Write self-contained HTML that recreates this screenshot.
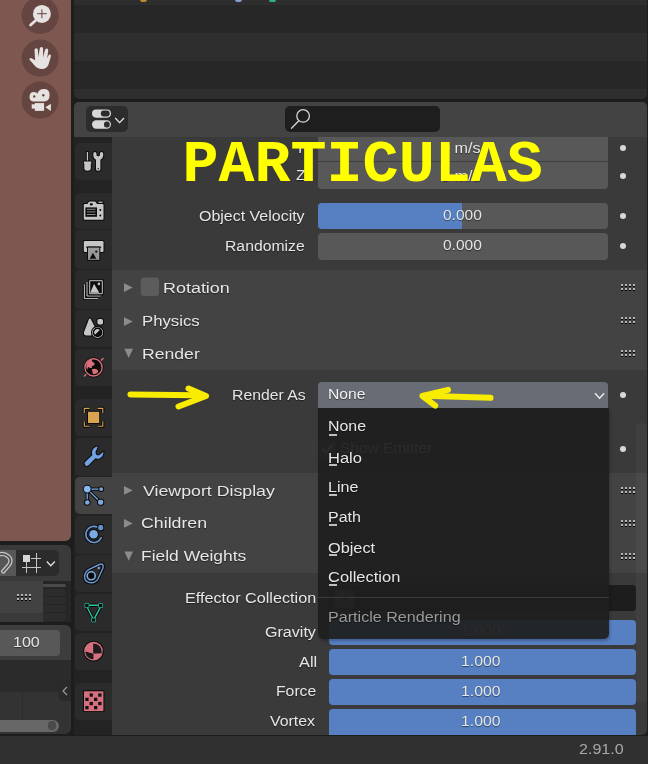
<!DOCTYPE html>
<html><head><meta charset="utf-8">
<style>
*{margin:0;padding:0;box-sizing:border-box}
html,body{width:648px;height:764px;overflow:hidden;background:#1d1d1d;font-family:"Liberation Sans",sans-serif;color:#e6e6e6}
.a{position:absolute}
.t{position:absolute;white-space:nowrap;line-height:1;font-size:15.5px;color:#e6e6e6;text-shadow:0 1px 1px rgba(0,0,0,.5);transform-origin:0 0;will-change:transform}
.r{text-align:right}
svg{position:absolute;overflow:visible}
.fld{position:absolute;background:#585858;border-radius:4px}
.dot{position:absolute;width:6.4px;height:6.4px;border-radius:50%;background:#d8d8d8}
.tab{position:absolute;left:75px;width:37px;background:#2b2b2b;border-radius:5px 0 0 5px}
.hdr{position:absolute;left:112px;width:535px;background:#434343}
.grip{position:absolute;width:15px;height:7px}
.ht{font-size:17px}
.mi{font-size:15.5px;color:#e8e8e8}
.ul{position:absolute;height:2px;background:#bdbdbd}
</style></head><body>

<!-- ============ LEFT VIEWPORT (red) ============ -->
<div class="a" style="left:0;top:0;width:71px;height:541px;background:#7e5750;border-bottom-right-radius:6px"></div>
<svg style="left:0;top:0" width="71" height="130" viewBox="0 0 71 130">
  <circle cx="40.1" cy="15.4" r="18.5" fill="#65453f"/>
  <circle cx="40.1" cy="58.1" r="18.5" fill="#65453f"/>
  <circle cx="40.1" cy="100.1" r="18.5" fill="#65453f"/>
  <!-- zoom -->
  <line x1="30.6" y1="25" x2="35.6" y2="20.5" stroke="#e6e2e1" stroke-width="2.8" stroke-linecap="round"/>
  <circle cx="41.9" cy="13.9" r="9" fill="#e6e2e1"/>
  <path d="M37.3 13.7H46.9M41.9 9.3V18.2" stroke="#65453f" stroke-width="1"/>
  <!-- hand -->
  <path d="M29.3 59.6 Q29.6 57.7 31.6 58.2 L35.1 60.2 L34.5 49.9 Q34.6 48.2 36.2 48.2 Q37.8 48.2 37.9 49.9 L38.4 57 L39.7 48.7 Q39.9 47 41.5 47 Q43.1 47 43.1 48.7 L43 57.2 L45 50.1 Q45.4 48.5 46.8 48.6 Q48.4 48.8 48.2 50.5 L47.2 58.2 L48.4 55.7 Q49 54.3 50.2 54.6 Q51.3 55 50.9 56.5 L48.6 64.2 Q47.1 69 41.8 69 Q37.2 69 34.6 65.6 Z" fill="#e6e2e1"/>
  <!-- camera -->
  <path d="M33.9 92 Q36.5 92 37.6 93.5 Q38.8 89 43.8 89 Q49.6 89 49.6 94.8 Q49.6 101.4 44 101.4 L33.9 101.4 Q29.5 101.4 29.5 96.7 Q29.5 92 33.9 92 Z" fill="#e6e2e1"/>
  <circle cx="34.2" cy="96.4" r="1.2" fill="#65453f"/>
  <circle cx="43.3" cy="95.2" r="1.2" fill="#65453f"/>
  <rect x="34.8" y="103.1" width="9.3" height="7.8" fill="#e6e2e1"/>
  <rect x="31.7" y="104.3" width="3.3" height="4.3" fill="#e6e2e1"/>
  <path d="M45.3 107.3 L50.9 103.8 L50.9 110.9 Z" fill="#e6e2e1"/>
</svg>

<!-- ============ LEFT LOWER EDITOR ============ -->
<div class="a" style="left:0;top:545px;width:71px;height:36px;background:#3a3a3a;border-top-right-radius:6px"></div>
<div class="a" style="left:0;top:550px;width:15.5px;height:26px;background:#575757"></div>
<svg style="left:0;top:550px" width="16" height="26" viewBox="0 0 16 26">
  <path d="M-3 5.5 Q3 2 8.5 6.5 Q12.5 10.5 8.5 15.5 L3.2 21.5" fill="none" stroke="#c8c8c8" stroke-width="4.2" stroke-linecap="round"/>
  <path d="M-3 5.5 Q3 2 8.5 6.5 Q12.5 10.5 8.5 15.5 L3.2 21.5" fill="none" stroke="#575757" stroke-width="1.8" stroke-linecap="round"/>
</svg>
<div class="a" style="left:15.5px;top:550px;width:43.5px;height:26px;background:#2b2b2b;border-radius:0 5px 5px 0"></div>
<svg style="left:0;top:545px" width="71" height="36" viewBox="0 545 71 36">
  <path d="M26.5 562V573M36.5 553V573M31 558.5H41M22 567.5H41" stroke="#c4c4c4" stroke-width="1"/>
  <rect x="23" y="555" width="7" height="7" fill="#d6d6d6"/>
  <path d="M46.8 561.5 L50.8 565.8 L54.8 561.5" fill="none" stroke="#e0e0e0" stroke-width="1.3"/>
</svg>
<div class="a" style="left:0;top:581px;width:43px;height:32px;background:#424242"></div>
<div class="a" style="left:0;top:613px;width:43px;height:8.5px;background:#3a3a3a"></div>
<div class="a" style="left:43px;top:581px;width:28px;height:41px;background:#262626"></div>
<div class="a" style="left:43px;top:583.5px;width:23px;height:3.5px;background:#4a4a4a;border-radius:0 2px 2px 0"></div>
<div class="a" style="left:43px;top:589px;width:23px;height:7px;background:#2c2c2c;border-radius:0 3px 3px 0"></div>
<div class="a" style="left:43px;top:597px;width:23px;height:7px;background:#2c2c2c;border-radius:0 3px 3px 0"></div>
<div class="a" style="left:43px;top:605px;width:23px;height:7px;background:#2c2c2c;border-radius:0 3px 3px 0"></div>
<div class="a" style="left:43px;top:613px;width:23px;height:8px;background:#2c2c2c;border-radius:0 3px 3px 0"></div>

<div class="a" style="left:0;top:625px;width:71px;height:109px;background:#333333;border-radius:0 6px 6px 0"></div>
<div class="a" style="left:0;top:625px;width:71px;height:35px;background:#3d3d3d;border-top-right-radius:6px"></div>
<div class="a" style="left:0;top:660px;width:71px;height:31.5px;background:#2b2b2b"></div>
<div class="a" style="left:22px;top:691px;width:1px;height:28px;background:#2b2b2b"></div>
<div class="fld" style="left:0;top:630px;width:59.5px;height:26px;border-radius:0 4px 4px 0"></div>
<div class="t" style="left:12.96px;top:634.20px;transform:scaleX(1.036)">100</div>
<div class="a" style="left:59px;top:681px;width:12px;height:20px;background:#2a2a2a;border-radius:4px 0 0 4px"></div>
<svg style="left:59px;top:681px" width="12" height="20" viewBox="0 0 12 20"><path d="M8 6 L4 10 L8 14" fill="none" stroke="#9a9a9a" stroke-width="1.2"/></svg>
<div class="a" style="left:0;top:719.5px;width:58.5px;height:12.5px;background:#676767;border-radius:0 6.25px 6.25px 0"></div>
<div class="a" style="left:47.6px;top:721.2px;width:8.6px;height:8.6px;background:#4a4a4a;border-radius:50%"></div>

<!-- ============ OUTLINER (top) ============ -->
<div class="a" style="left:74px;top:0;width:573px;height:99px;background:#2e2e2e;border-radius:0 0 5px 5px;overflow:hidden">
  <div class="a" style="left:0;top:5px;width:573px;height:28px;background:#272727"></div>
  <div class="a" style="left:0;top:61px;width:573px;height:28px;background:#272727"></div>
  <div class="a" style="left:66px;top:-3px;width:7px;height:5px;background:#c08a30;border-radius:3px"></div>
  <div class="a" style="left:161px;top:-3px;width:7px;height:5px;background:#8aa0d0;border-radius:3px"></div>
  <div class="a" style="left:195px;top:-3px;width:7px;height:5px;background:#30b080;border-radius:2px"></div>
</div>

<!-- ============ PROPERTIES ============ -->
<div class="a" style="left:74px;top:102px;width:573px;height:633px;background:#3a3a3a;border-radius:5px 5px 5px 0;overflow:hidden"></div>
<!-- tab column -->
<div class="a" style="left:74px;top:137px;width:38px;height:598px;background:#232323"></div>
<div class="tab" style="top:143px;height:36.5px"></div>
<div class="tab" style="top:192.5px;height:36.5px"></div>
<div class="tab" style="top:230px;height:39px"></div>
<div class="tab" style="top:270px;height:38.5px"></div>
<div class="tab" style="top:310px;height:37px"></div>
<div class="tab" style="top:349px;height:37px"></div>
<div class="tab" style="top:399px;height:37px"></div>
<div class="tab" style="top:438px;height:37.5px"></div>
<div class="tab" style="top:477px;height:36.5px;background:#434343"></div>
<div class="tab" style="top:516px;height:37.5px"></div>
<div class="tab" style="top:555px;height:37px"></div>
<div class="tab" style="top:594px;height:37px"></div>
<div class="tab" style="top:633px;height:37px"></div>
<div class="tab" style="top:683px;height:37px"></div>

<!-- tab icons -->
<svg style="left:76px;top:0" width="36" height="764" viewBox="0 0 36 764">
  <g stroke="#0c0c0c" stroke-width="2" paint-order="stroke" stroke-linejoin="round">
  <!-- tool -->
  <g transform="translate(0,143)" fill="#c6c6c6">
    <rect x="10.8" y="9" width="1.3" height="9"/>
    <path d="M8.2 18.6 H14.9 Q15.3 18.6 15.3 19.3 V20 Q15.3 20.5 14.8 20.6 V25.3 Q14.8 27.8 11.5 27.8 Q8.3 27.8 8.3 25.3 V20.6 Q7.8 20.5 7.8 20 V19.3 Q7.8 18.6 8.2 18.6 Z"/>
    <path d="M17.3 10.5 Q17.3 9 18.8 9 Q20.5 9 20.5 10.5 V12 Q20.5 13.3 22.2 13.3 Q23.9 13.3 23.9 12 V10.5 Q23.9 9 25.5 9 Q27.2 9 27.2 10.5 V12.5 Q27.2 15.5 24.4 16.8 V26.3 Q24.4 27.8 22.2 27.8 Q20 27.8 20 26.3 V16.8 Q17.3 15.5 17.3 12.5 Z"/>
  </g>
  <circle cx="22.2" cy="168.8" r="0.7" fill="#0c0c0c" stroke="none"/>
  <!-- render -->
  <g transform="translate(0,192)">
    <path d="M8.8 12 H11.5 L12.5 10.2 Q13 9.6 14 9.6 H18.5 Q19.3 9.6 19.8 10.2 L21 12 H26.5 Q27.5 12 27.5 13 V26.8 Q27.5 27.8 26.5 27.8 H8.8 Q7.8 27.8 7.8 26.8 V13 Q7.8 12 8.8 12 Z" fill="#c6c6c6"/>
    <rect x="22.5" y="9.6" width="4" height="1.2" fill="#c6c6c6"/>
    <rect x="9.4" y="15.4" width="11.6" height="9.4" fill="#0c0c0c" stroke="none"/>
    <g fill="#8a8a8a" stroke="none"><rect x="10.9" y="16.8" width="8.6" height="1"/><rect x="10.9" y="19.4" width="8.6" height="1"/><rect x="10.9" y="22" width="8.6" height="1"/></g>
    <rect x="13.8" y="11.2" width="3" height="2.2" rx="0.8" fill="#0c0c0c" stroke="none"/>
    <circle cx="24.3" cy="18" r="1" fill="#0c0c0c" stroke="none"/>
    <circle cx="24.3" cy="23.6" r="1" fill="#0c0c0c" stroke="none"/>
  </g>
  <!-- output -->
  <g transform="translate(0,231)">
    <path d="M9 10 H26.3 Q27.5 10 27.5 11.2 V20 Q27.5 21 26.5 21 H8.8 Q7.8 21 7.8 20 V11.2 Q7.8 10 9 10 Z" fill="#c6c6c6"/>
    <rect x="10.2" y="15.6" width="15" height="1.2" fill="#0c0c0c" stroke="none"/>
    <rect x="12" y="16.6" width="11.3" height="12.2" fill="#9a9a9a"/>
    <path d="M13.6 27.8 L16.9 21.8 L20.3 27.8 Z" fill="#0c0c0c" stroke="none"/>
    <circle cx="20.3" cy="20.7" r="1.15" fill="#0c0c0c" stroke="none"/>
  </g>
  <!-- view layer -->
  <g transform="translate(0,270)">
    <path d="M8.4 15 V28.6 H21.4" fill="none" stroke="#0c0c0c" stroke-width="3"/>
    <path d="M8.4 15 V28.6 H21.4" fill="none" stroke="#c6c6c6" stroke-width="1" stroke-linecap="square"/>
    <path d="M11 12.5 V26 H24" fill="none" stroke="#0c0c0c" stroke-width="3"/>
    <path d="M11 12.5 V26 H24" fill="none" stroke="#c6c6c6" stroke-width="1" stroke-linecap="square"/>
    <rect x="13.2" y="10.2" width="13.6" height="14" fill="#0c0c0c" stroke="#0c0c0c" stroke-width="2"/>
    <rect x="13.7" y="10.7" width="12.6" height="13" fill="none" stroke="#c6c6c6" stroke-width="1" />
    <path d="M14.3 22.7 L18 13.8 L23.3 22.7 Z" fill="#c6c6c6" stroke="none"/>
    <circle cx="22.9" cy="13.9" r="1.3" fill="#c6c6c6" stroke="none"/>
  </g>
  <!-- scene -->
  <g transform="translate(0,310)">
    <path d="M13.9 8.6 Q14.6 8.6 15 9.4 L19.2 17.8 Q15.4 19.8 15.6 25.6 L10.5 25.6 Q7.6 25.6 7.9 22.6 L12.8 9.4 Q13.2 8.6 13.9 8.6 Z" fill="#c6c6c6"/>
    <rect x="21.4" y="9" width="5.6" height="5.4" rx="1.6" fill="#c6c6c6"/>
    <circle cx="21.6" cy="22.4" r="4.8" fill="#0c0c0c" stroke="#0c0c0c" stroke-width="3.6"/>
    <circle cx="21.6" cy="22.4" r="4.8" fill="#0c0c0c" stroke="#c6c6c6" stroke-width="1.4"/>
    <path d="M19.2 24.6 A3.2 3.2 0 0 1 23.8 20.1 Z" fill="#c6c6c6" stroke="none"/>
  </g>
  <!-- world -->
  <g transform="translate(0,349)">
    <path d="M8.4 27.1 L27.1 9.5" stroke="#d9707c" stroke-width="1.4" stroke-linecap="round"/>
    <circle cx="17.5" cy="18.4" r="8.6" fill="#0c0c0c" stroke="#0c0c0c" stroke-width="3"/>
    <circle cx="17.5" cy="18.4" r="8.6" fill="none" stroke="#d9707c" stroke-width="1.4"/>
    <path d="M10.6 14 Q12.6 10.8 16.2 10.3 Q15.4 11.9 16.6 12.9 Q18.8 13.4 18.7 15.2 Q17.8 16.8 16.3 17 Q15.2 17.6 16 18.8 Q14.5 19.3 13.4 18.4 Q12.5 17.5 11.8 19 Q11.2 20.5 11.3 21.3 Q9.6 17.6 10.6 14 Z" fill="#d9707c" stroke="none"/>
    <path d="M15.9 20.2 Q18.2 19.4 20.8 20.2 Q22.6 21.2 22 23.2 Q20.5 25.2 17 25.3 Q16.3 22.5 15.9 20.2 Z" fill="#d9707c" stroke="none"/>
  </g>
  <!-- object -->
  <g transform="translate(0,399)">
    <path d="M8.3 14 V9.4 H13.4 M21.7 9.4 H26.8 V14 M8.3 22.5 V27.3 H13.4 M21.7 27.3 H26.8 V22.5" fill="none" stroke="#0c0c0c" stroke-width="3.2"/>
    <path d="M8.3 14 V9.4 H13.4 M21.7 9.4 H26.8 V14 M8.3 22.5 V27.3 H13.4 M21.7 27.3 H26.8 V22.5" fill="none" stroke="#daa350" stroke-width="1.1"/>
    <rect x="12" y="12.8" width="11.2" height="11.2" fill="#daa350"/>
  </g>
  <!-- modifier -->
  <g transform="translate(0,438)">
    <path d="M22 8.6 Q17 9 16 13.8 Q15.6 15.8 16.4 17.1 L9.1 24 Q7.9 25.6 9.3 27.2 Q10.9 28.6 12.5 27.2 L19.5 20.3 Q21.3 21 23.5 20.4 Q27.4 18.8 27.5 13.8 L23.8 16.8 Q22.2 17.8 20.6 16.9 Q19.1 15.5 19.7 13.6 Z" fill="#72a2e2"/>
  </g>
  <!-- particles (active) -->
  <g transform="translate(0,477)">
    <path d="M11.2 12.1 H25.2 M11.2 12.1 V25.5 M11.2 12.1 L24.5 25.3" stroke="#0c0c0c" stroke-width="3.4" fill="none"/>
    <path d="M11.2 12.1 H25.2 M11.2 12.1 V25.5 M11.2 12.1 L24.5 25.3" stroke="#7aa9e4" stroke-width="1.3" fill="none"/>
    <circle cx="11.2" cy="12.1" r="3.4" fill="#86b8f4"/>
    <circle cx="25.2" cy="12.1" r="1.9" fill="#7aa9e4"/>
    <circle cx="11.3" cy="25.5" r="2.3" fill="#7aa9e4"/>
    <rect x="22" y="22.8" width="5.2" height="5" rx="2" fill="#7aa9e4"/>
  </g>
  <!-- physics -->
  <g transform="translate(0,516)">
    <path d="M25.2 21.6 A8 8 0 1 1 21.5 11.3" fill="none" stroke="#0c0c0c" stroke-width="3.4" stroke-linecap="round"/>
    <path d="M25.2 21.6 A8 8 0 1 1 21.5 11.3" fill="none" stroke="#6e9ad6" stroke-width="1.6" stroke-linecap="round"/>
    <circle cx="17.6" cy="18.2" r="4.3" fill="#7aa9e4"/>
    <rect x="22.2" y="9" width="5" height="5.2" rx="1.8" fill="#6490c8"/>
  </g>
  <!-- constraints -->
  <g transform="translate(0,555)">
    <path d="M8.6 22.3 Q8.4 16.8 13.2 14.4 L23.3 9.5 Q26 8.4 26.9 10.1 Q27.7 11.6 26.7 13.7 L21.9 24 Q19.7 27.9 15.2 27.8 Q9 27.5 8.6 22.3 Z" fill="none" stroke="#0c0c0c" stroke-width="3.6"/>
    <path d="M8.6 22.3 Q8.4 16.8 13.2 14.4 L23.3 9.5 Q26 8.4 26.9 10.1 Q27.7 11.6 26.7 13.7 L21.9 24 Q19.7 27.9 15.2 27.8 Q9 27.5 8.6 22.3 Z" fill="none" stroke="#6e9ad6" stroke-width="1.4"/>
    <circle cx="15.2" cy="20.8" r="3.2" fill="#0c0c0c" stroke="#7aa9e4" stroke-width="3.2"/>
    <circle cx="15.2" cy="20.8" r="1.3" fill="#050505" stroke="none"/>
    <circle cx="22.8" cy="13" r="1.2" fill="#7aa9e4" stroke="none"/>
  </g>
  <!-- data -->
  <g transform="translate(0,594)">
    <path d="M12.8 11.3 H22.6 M11.2 13.2 L16.8 24.2 M24.4 13.2 L18.6 24.2" stroke="#0c0c0c" stroke-width="3.4" fill="none"/>
    <path d="M12.8 11.3 H22.6 M11.2 13.2 L16.8 24.2 M24.4 13.2 L18.6 24.2" stroke="#29c4a0" stroke-width="1.4" fill="none"/>
    <rect x="9.2" y="9.9" width="3.4" height="3.2" fill="#0c0c0c" stroke="#29c4a0" stroke-width="1.3"/>
    <rect x="22.9" y="9.9" width="3.4" height="3.2" fill="#0c0c0c" stroke="#29c4a0" stroke-width="1.3"/>
    <rect x="15.9" y="24.4" width="3.3" height="3.2" fill="#0c0c0c" stroke="#29c4a0" stroke-width="1.3"/>
  </g>
  <!-- material -->
  <g transform="translate(0,633)">
    <circle cx="17.5" cy="18.1" r="9.3" fill="#d5707e" stroke-width="2.2"/>
    <path d="M17.9 11 Q25 11.8 25.1 19.7 L17.9 19.9 Z" fill="#1c1c1c" stroke="#0c0c0c" stroke-width="1.2"/>
    <path d="M10 19.4 L16.8 21.3 L16.8 25.6 Q11.2 25.2 10 19.4 Z" fill="#1c1c1c" stroke="#0c0c0c" stroke-width="1.2"/>
  </g>
  <!-- texture -->
  <g transform="translate(0,683)">
    <rect x="8" y="8.3" width="19.4" height="19.8" fill="#d5707e"/>
    <g fill="#111" stroke="none">
      <rect x="13.6" y="10.4" width="3.3" height="3.3"/><rect x="22.2" y="10.4" width="3.3" height="3.3"/>
      <rect x="9.3" y="14.7" width="3.3" height="3.3"/><rect x="18" y="14.7" width="3.3" height="3.3"/>
      <rect x="13.6" y="18.9" width="3.3" height="3.3"/><rect x="22.2" y="18.9" width="3.3" height="3.3"/>
      <rect x="9.3" y="23" width="3.3" height="3.3"/><rect x="18" y="23" width="3.3" height="3.3"/>
    </g>
  </g>
  </g>
</svg>

<!-- content: velocity panel fields -->
<div class="fld" style="left:318px;top:113px;width:290px;height:76px"></div>
<div class="a" style="left:318px;top:161px;width:290px;height:1px;background:#3f3f3f"></div>
<div class="t" style="left:295.00px;top:139.50px">Y</div>
<div class="t" style="left:295.50px;top:167.00px;transform:scaleX(1.022)">Z</div>
<div class="t" style="left:441.00px;top:140.20px;transform:scaleX(1.045)">0 m/s</div>
<div class="t" style="left:441.00px;top:167.80px;transform:scaleX(1.045)">0 m/s</div>
<div class="fld" style="left:318px;top:203px;width:290px;height:26px"></div>
<div class="a" style="left:318px;top:203px;width:144px;height:26px;background:#5680c2;border-radius:4px 0 0 4px"></div>
<div class="fld" style="left:318px;top:233px;width:290px;height:26.5px"></div>
<div class="t" style="left:198.57px;top:208.00px;transform:scaleX(1.030)">Object Velocity</div>
<div class="t" style="left:225.08px;top:237.70px;transform:scaleX(1.016)">Randomize</div>
<div class="t" style="left:442.80px;top:206.80px">0.000</div>
<div class="t" style="left:442.80px;top:236.60px">0.000</div>
<div class="dot" style="left:619.8px;top:144.6px"></div>
<div class="dot" style="left:619.8px;top:172.6px"></div>
<div class="dot" style="left:619.8px;top:212.6px"></div>
<div class="dot" style="left:619.8px;top:242.7px"></div>

<!-- panel headers: Rotation/Physics/Render -->
<div class="hdr" style="top:270px;height:100px"></div>
<svg style="left:112px;top:270px" width="535" height="100" viewBox="0 0 535 100">
  <path d="M12 13.2 L20.7 17.6 L12 22 Z" fill="#8c8c8c"/>
  <path d="M12 47.2 L20.7 51.6 L12 56 Z" fill="#8c8c8c"/>
  <path d="M12.4 78.7 L21 78.7 L16.7 88 Z" fill="#8c8c8c"/>
  <rect x="28.8" y="7.6" width="18.2" height="18.3" rx="3" fill="#5c5c5c"/>
</svg>
<div class="t" style="left:163.14px;top:279.90px;transform:scaleX(1.157)">Rotation</div>
<div class="t" style="left:141.72px;top:312.90px;transform:scaleX(1.081)">Physics</div>
<div class="t" style="left:141.66px;top:346.00px;transform:scaleX(1.136)">Render</div>

<!-- render panel content -->
<div class="t" style="left:231.88px;top:387.30px;transform:scaleX(1.018)">Render As</div>
<div class="a" style="left:318px;top:382px;width:290px;height:26px;background:#686c74;border-radius:4px 4px 0 0"></div>
<div class="t" style="left:327.99px;top:386.30px;transform:scaleX(1.011);color:#f2f2f2">None</div>
<svg style="left:590px;top:388px" width="18" height="14" viewBox="0 0 18 14"><path d="M5 5.3 L9.6 10.2 L14.2 5.3" fill="none" stroke="#eee" stroke-width="1.4"/></svg>
<div class="dot" style="left:619.8px;top:391.8px"></div>
<div class="dot" style="left:619.8px;top:445.5px"></div>


<!-- headers: Viewport Display / Children / Field Weights -->
<div class="hdr" style="top:473px;height:100px"></div>
<svg style="left:112px;top:473px" width="535" height="100" viewBox="0 0 535 100">
  <path d="M12 13 L20.7 17.4 L12 21.8 Z" fill="#8c8c8c"/>
  <path d="M12 46 L20.7 50.4 L12 54.8 Z" fill="#8c8c8c"/>
  <path d="M12.4 78.5 L21 78.5 L16.7 87.8 Z" fill="#8c8c8c"/>
</svg>
<div class="t" style="left:142.50px;top:483.00px;transform:scaleX(1.145)">Viewport Display</div>
<div class="t" style="left:141.36px;top:515.40px;transform:scaleX(1.145)">Children</div>
<div class="t" style="left:141.38px;top:548.20px;transform:scaleX(1.125)">Field Weights</div>

<!-- field weights content -->
<div class="t" style="left:184.75px;top:590.00px;transform:scaleX(1.045)">Effector Collection</div>
<div class="t" style="left:264.56px;top:624.20px;transform:scaleX(1.037)">Gravity</div>
<div class="t" style="left:298.50px;top:653.60px;transform:scaleX(1.056)">All</div>
<div class="t" style="left:275.78px;top:682.70px;transform:scaleX(1.016)">Force</div>
<div class="t" style="left:270.30px;top:712.80px;transform:scaleX(1.025)">Vortex</div>
<div class="a" style="left:329px;top:585px;width:307px;height:26px;background:#1d1d1d;border-radius:4px"></div>
<div class="a" style="left:329px;top:619.5px;width:307px;height:25.5px;background:#5680c2;border-radius:4px"></div>
<div class="a" style="left:329px;top:649px;width:307px;height:25.5px;background:#5680c2;border-radius:4px"></div>
<div class="a" style="left:329px;top:679px;width:307px;height:25.5px;background:#5680c2;border-radius:4px"></div>
<div class="a" style="left:329px;top:709px;width:307px;height:26px;background:#5680c2;border-radius:4px 4px 0 0"></div>
<div class="t" style="left:461.38px;top:623.20px;transform:scaleX(1.016)">1.000</div>
<div class="t" style="left:461.38px;top:653.20px;transform:scaleX(1.016)">1.000</div>
<div class="t" style="left:461.38px;top:683.00px;transform:scaleX(1.016)">1.000</div>
<div class="t" style="left:461.38px;top:713.00px;transform:scaleX(1.016)">1.000</div>

<div class="a" style="left:636px;top:423px;width:10.5px;height:280px;background:rgba(255,255,255,0.035);border-radius:5px"></div>
<!-- grips -->
<svg style="left:0;top:0" width="648" height="764" viewBox="0 0 648 764">
  <defs>
    <g id="grip">
      <g fill="#050505"><rect x="0" y="2" width="2" height="1"/><rect x="4" y="2" width="2" height="1"/><rect x="8" y="2" width="2" height="1"/><rect x="12" y="2" width="2" height="1"/><rect x="0" y="6" width="2" height="1"/><rect x="4" y="6" width="2" height="1"/><rect x="8" y="6" width="2" height="1"/><rect x="12" y="6" width="2" height="1"/></g>
      <g fill="#b4b4b4"><rect x="0" y="0" width="2" height="2"/><rect x="4" y="0" width="2" height="2"/><rect x="8" y="0" width="2" height="2"/><rect x="12" y="0" width="2" height="2"/><rect x="0" y="4" width="2" height="2"/><rect x="4" y="4" width="2" height="2"/><rect x="8" y="4" width="2" height="2"/><rect x="12" y="4" width="2" height="2"/></g>
    </g>
  </defs>
  <use href="#grip" x="621" y="284"/>
  <use href="#grip" x="621" y="317"/>
  <use href="#grip" x="621" y="350"/>
  <use href="#grip" x="621" y="487"/>
  <use href="#grip" x="621" y="520"/>
  <use href="#grip" x="621" y="553"/>
  <use href="#grip" x="17" y="594"/>
</svg>

<!-- ghost show emitter (under menu) -->
<div class="a" style="left:319px;top:440px;width:17px;height:17.5px;background:#5a5a5a;border-radius:3px"></div>
<svg style="left:319px;top:440px" width="17" height="18" viewBox="0 0 17 18"><path d="M3.5 9 L7 12.5 L13.5 5" fill="none" stroke="#e0e0e0" stroke-width="2"/></svg>
<div class="t" style="left:340.20px;top:440.20px;color:#e6e6e6">Show Emitter</div>
<div class="a" style="left:335px;top:590px;width:19px;height:18px;background:#666;border-radius:2px"></div>
<div class="a" style="left:341px;top:598px;width:7px;height:3px;background:#222"></div>

<!-- ============ DROPDOWN MENU ============ -->
<div class="a" style="left:318px;top:407.5px;width:291px;height:231px;background:rgba(31,31,31,0.94);border-radius:0 0 5px 5px;box-shadow:1px 2px 3px rgba(0,0,0,.25)"></div>
<div class="t" style="left:327.58px;top:418.00px;transform:scaleX(1.025)">None</div>
<div class="t" style="left:327.54px;top:449.60px;transform:scaleX(1.063)">Halo</div>
<div class="t" style="left:327.56px;top:479.40px;transform:scaleX(1.039)">Line</div>
<div class="t" style="left:327.57px;top:509.40px;transform:scaleX(1.033)">Path</div>
<div class="t" style="left:327.55px;top:539.60px;transform:scaleX(1.052)">Object</div>
<div class="t" style="left:327.54px;top:569.20px;transform:scaleX(1.062)">Collection</div>
<div class="ul" style="left:328.5px;top:434px;width:8.5px"></div>
<div class="ul" style="left:328.5px;top:464px;width:8.5px"></div>
<div class="ul" style="left:328.5px;top:494px;width:8.5px"></div>
<div class="ul" style="left:328.5px;top:524px;width:8.5px"></div>
<div class="ul" style="left:328.5px;top:554px;width:8.5px"></div>
<div class="ul" style="left:328.5px;top:584px;width:8.5px"></div>
<div class="a" style="left:318px;top:597px;width:291px;height:1px;background:#3a3a3a"></div>
<div class="t" style="left:327.56px;top:609.00px;transform:scaleX(1.040);color:#9a9a9a">Particle Rendering</div>

<!-- ============ YELLOW ANNOTATIONS ============ -->
<div class="a" style="left:182.6px;top:134.9px;white-space:nowrap;line-height:1;font-family:'Liberation Mono',monospace;font-weight:bold;font-size:60px;color:#ffff00">PARTICULAS</div>
<svg style="left:0;top:0" width="648" height="764" viewBox="0 0 648 764">
  <g fill="none" stroke="#f8ec00" stroke-width="6" stroke-linecap="round" stroke-linejoin="round">
    <path d="M130.4 394.4 L197 395.2"/>
    <path d="M188.5 388.5 L206 396 L178.5 406.5"/>
    <path d="M490.5 397.8 L424 395.8"/>
    <path d="M448 389.8 L422.5 396 L435.2 405.6"/>
  </g>
</svg>

<!-- ============ PROPERTIES HEADER (on top) ============ -->
<div class="a" style="left:74px;top:102px;width:573px;height:35px;background:#434343;border-radius:5px 5px 0 0"></div>
<div class="a" style="left:86px;top:106px;width:42px;height:26px;background:#2c2c2c;border-radius:5px"></div>
<svg style="left:86px;top:106px" width="42" height="26" viewBox="86 106 42 26">
  <rect x="92" y="109.4" width="19" height="8.3" rx="4.1" fill="#d8d8d8"/>
  <rect x="100.8" y="110.6" width="8.9" height="5.9" rx="2.9" fill="#2c2c2c"/>
  <rect x="92" y="120.2" width="19" height="8.5" rx="4.2" fill="#d8d8d8"/>
  <rect x="104" y="121.4" width="5.7" height="6.1" rx="2.5" fill="#2c2c2c"/>
  <path d="M115.2 118 L119.6 122.6 L124 118" fill="none" stroke="#e6e6e6" stroke-width="1.3"/>
</svg>
<div class="a" style="left:285px;top:106px;width:155px;height:26px;background:#1e1e1e;border-radius:5px"></div>
<svg style="left:285px;top:106px" width="30" height="26" viewBox="285 106 30 26">
  <circle cx="303.1" cy="115.9" r="6.3" fill="none" stroke="#d6d6d6" stroke-width="1.3"/>
  <path d="M291.5 128.2 L298.6 121" stroke="#d6d6d6" stroke-width="1.3" stroke-linecap="round"/>
</svg>

<!-- ============ STATUS BAR ============ -->
<div class="a" style="left:0;top:736px;width:648px;height:28px;background:#303030"></div>
<div class="t" style="left:579.36px;top:740.90px;transform:scaleX(1.038);color:#a8a8a8;text-shadow:none">2.91.0</div>

</body></html>
